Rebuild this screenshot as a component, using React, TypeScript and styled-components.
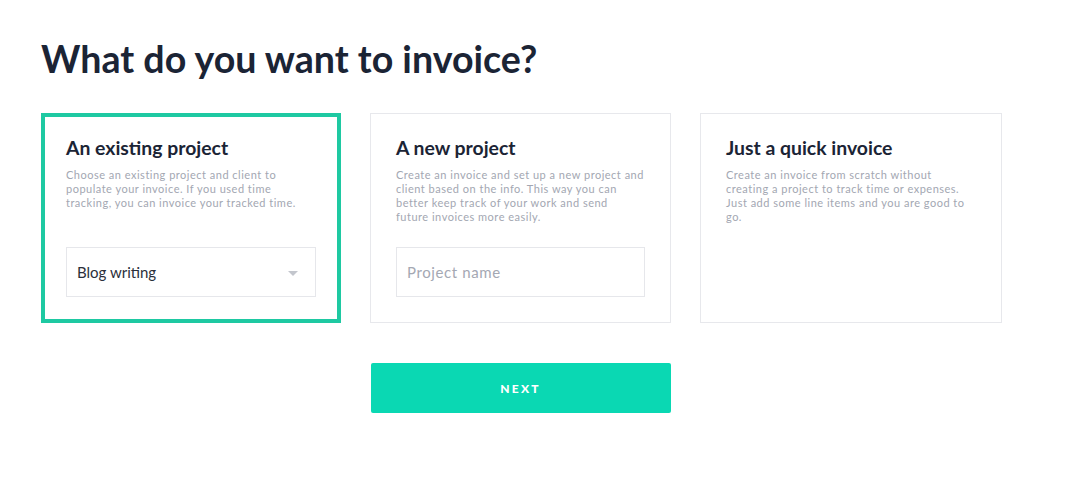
import React from "react";
import styled, { createGlobalStyle } from "styled-components";

const Global = createGlobalStyle`
  html, body { margin: 0; padding: 0; background: #ffffff; }
  body { font-family: Lato, "Open Sans", "Liberation Sans", sans-serif; -webkit-font-smoothing: antialiased; }
  * { box-sizing: border-box; }
`;

const Page = styled.main`
  padding: 35px 41px 0;
  display: flex;
  flex-direction: column;
`;

const Title = styled.h1`
  margin: 0;
  font-size: 37.6px;
  line-height: 48px;
  font-weight: 700;
  color: #1b2435;
  letter-spacing: 0;
`;

const Cards = styled.div`
  display: grid;
  grid-template-columns: 300px 301px 302px;
  column-gap: 29px;
  margin-top: 30px;
`;

const Card = styled.section<{ $selected?: boolean }>`
  height: 210px;
  background: #fff;
  border: ${(p) => (p.$selected ? "4px solid #1ec9a2" : "1px solid #e7e8ec")};
  padding: ${(p) => (p.$selected ? "19px 21px 22px 21px" : "22px 25px 25px 25px")};
  display: flex;
  flex-direction: column;
`;

const CardTitle = styled.h2`
  margin: 0;
  font-size: 19.4px;
  line-height: 24px;
  font-weight: 700;
  color: #1b2435;
`;

const CardText = styled.p`
  margin: 8px 0 0;
  font-size: 11px;
  line-height: 14px;
  color: #a3a7b2;
  letter-spacing: 0.5px;
`;

const Field = styled.div`
  margin-top: auto;
  height: 50px;
  border: 1px solid #e6e7eb;
  display: flex;
  align-items: center;
  padding: 0 10px;
  font-size: 15px;
  color: #2a2f3a;
  position: relative;
`;

const Placeholder = styled.span`
  color: #a4a8b3;
  letter-spacing: 0.6px;
`;

const Caret = styled.span`
  position: absolute;
  right: 17px;
  top: 23px;
  width: 0;
  height: 0;
  border-left: 5px solid transparent;
  border-right: 5px solid transparent;
  border-top: 5px solid #c3c6cd;
`;

const ButtonRow = styled.div`
  display: flex;
  justify-content: center;
  width: 959px;
  margin-top: 40px;
`;

const NextButton = styled.button`
  width: 300px;
  height: 50px;
  border: none;
  border-radius: 2px;
  background: #0ad8b3;
  color: #fff;
  font-family: inherit;
  font-size: 12px;
  font-weight: 900;
  letter-spacing: 2.2px;
  cursor: pointer;
`;

export default function App() {
  return (
    <>
      <Global />
      <Page>
        <Title>What do you want to invoice?</Title>
        <Cards>
          <Card $selected>
            <CardTitle>An existing project</CardTitle>
            <CardText>
              Choose an existing project and client to populate your invoice. If you used time
              tracking, you can invoice your tracked time.
            </CardText>
            <Field>
              Blog writing
              <Caret />
            </Field>
          </Card>
          <Card>
            <CardTitle>A new project</CardTitle>
            <CardText>
              Create an invoice and set up a new project and client based on the info. This way
              you can better keep track of your work and send
              <br />
              future invoices more easily.
            </CardText>
            <Field>
              <Placeholder>Project name</Placeholder>
            </Field>
          </Card>
          <Card>
            <CardTitle>Just a quick invoice</CardTitle>
            <CardText>
              Create an invoice from scratch without creating a project to track time or
              expenses. Just add some line items and you are good to go.
            </CardText>
          </Card>
        </Cards>
        <ButtonRow>
          <NextButton>NEXT</NextButton>
        </ButtonRow>
      </Page>
    </>
  );
}
